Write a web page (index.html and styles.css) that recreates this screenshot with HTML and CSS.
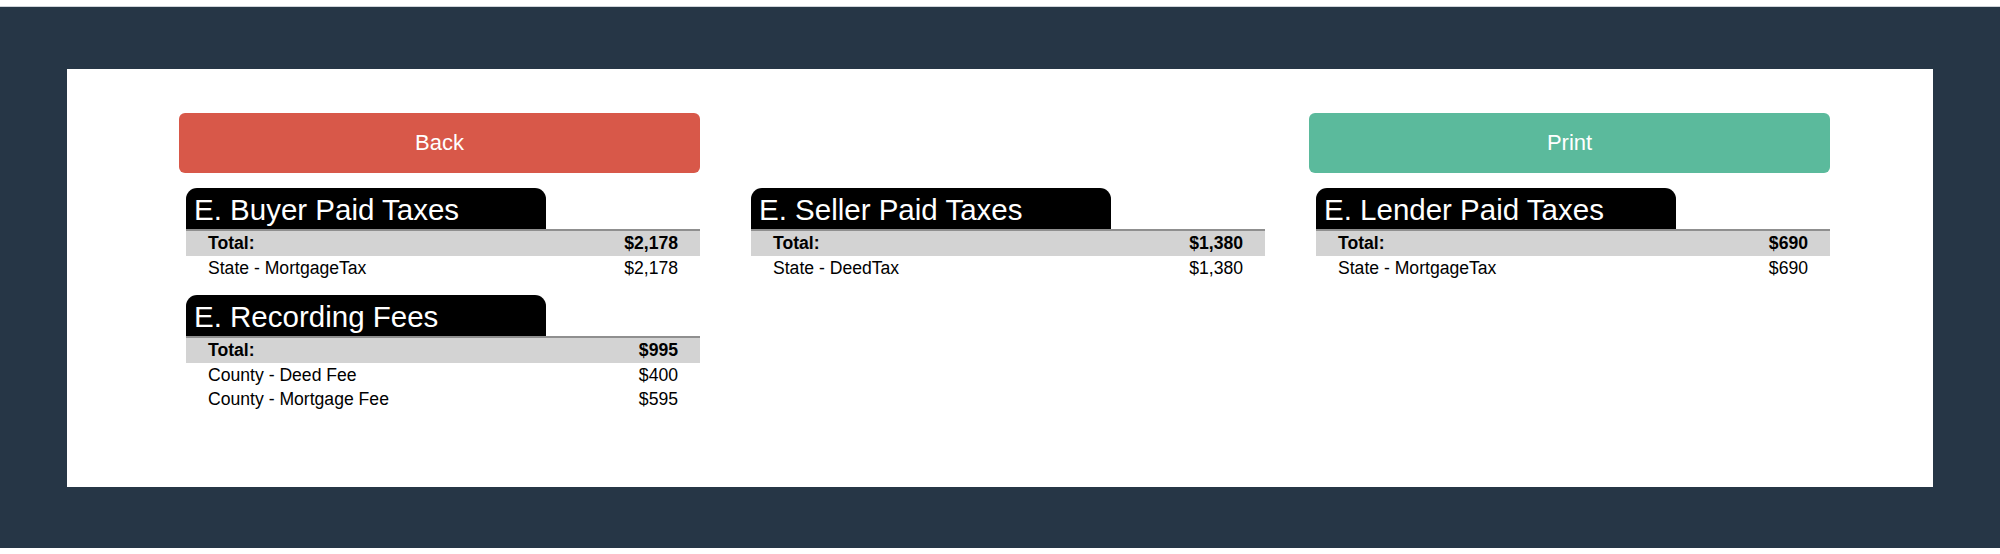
FILE: index.html
```html
<!DOCTYPE html>
<html>
<head>
<meta charset="utf-8">
<link rel="stylesheet" href="styles.css">
</head>
<body>
<div class="page">
  <div class="panel">
    <div class="grid">
      <button class="btn btn-back">Back</button>
      <div class="spacer"></div>
      <button class="btn btn-print">Print</button>

      <div class="col">
        <section class="card">
          <div class="card-head"><h2 class="tab">E. Buyer Paid Taxes</h2></div>
          <div class="row total"><span>Total:</span><span>$2,178</span></div>
          <div class="row"><span>State - MortgageTax</span><span>$2,178</span></div>
        </section>
        <section class="card">
          <div class="card-head"><h2 class="tab">E. Recording Fees</h2></div>
          <div class="row total"><span>Total:</span><span>$995</span></div>
          <div class="row"><span>County - Deed Fee</span><span>$400</span></div>
          <div class="row"><span>County - Mortgage Fee</span><span>$595</span></div>
        </section>
      </div>

      <div class="col">
        <section class="card">
          <div class="card-head"><h2 class="tab">E. Seller Paid Taxes</h2></div>
          <div class="row total"><span>Total:</span><span>$1,380</span></div>
          <div class="row"><span>State - DeedTax</span><span>$1,380</span></div>
        </section>
      </div>

      <div class="col">
        <section class="card">
          <div class="card-head"><h2 class="tab">E. Lender Paid Taxes</h2></div>
          <div class="row total"><span>Total:</span><span>$690</span></div>
          <div class="row"><span>State - MortgageTax</span><span>$690</span></div>
        </section>
      </div>
    </div>
  </div>
</div>
</body>
</html>
```

FILE: styles.css
```css
html, body {
  margin: 0;
  padding: 0;
  background: #ffffff;
  font-family: "Liberation Sans", Arial, Helvetica, sans-serif;
}

.page {
  margin-top: 6px;
  border-top: 1px solid #cfd4d9;
  background: #263646;
  height: 542px;
  box-sizing: border-box;
  padding: 62px 67px;
}

.panel {
  background: #ffffff;
  height: 418px;
  box-sizing: border-box;
  padding: 44px 0 0 112px;
}

.grid {
  display: grid;
  grid-template-columns: repeat(3, 521px);
  grid-template-rows: 60px auto;
  column-gap: 44px;
  row-gap: 15px;
}

.btn {
  height: 60px;
  border: none;
  border-radius: 6px;
  color: #ffffff;
  font-family: "Liberation Sans", Arial, Helvetica, sans-serif;
  font-size: 22px;
  padding: 0;
  margin: 0;
}

.btn-back {
  background: #d85849;
}

.btn-print {
  background: #5bba9c;
}

.col {
  padding-left: 7px;
}

.card {
  margin-bottom: 15px;
}

.card-head {
  border-bottom: 2px solid #8f8f8f;
}

.tab {
  margin: 0;
  width: 360px;
  height: 41px;
  box-sizing: border-box;
  background: #000000;
  color: #ffffff;
  border-radius: 11px 11px 0 0;
  font-size: 29.5px;
  font-weight: normal;
  line-height: 43px;
  padding-left: 8px;
  white-space: nowrap;
  overflow: hidden;
}

.row {
  display: flex;
  justify-content: space-between;
  padding: 0 22px;
  height: 24px;
  line-height: 24px;
  font-size: 17.6px;
  color: #000000;
}

.row.total {
  background: #d3d3d3;
  height: 25px;
  line-height: 25px;
  font-weight: bold;
}
```
